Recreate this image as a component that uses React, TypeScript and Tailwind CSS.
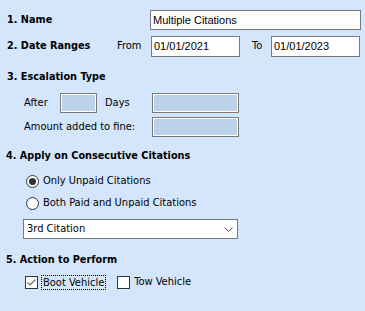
import React from "react";

const LABEL = "font-['DejaVu_Sans_Condensed','DejaVu_Sans',sans-serif] text-[11px] text-black";
const HEAD = "font-['DejaVu_Sans_Condensed','DejaVu_Sans',sans-serif] text-[10.8px] font-bold text-black";
const FIELD = "font-['Liberation_Sans',Arial,sans-serif] text-[11px] text-black";

const TextBox = ({ value, className }: { value: string; className: string }) => (
  <div
    className={`${className} ${FIELD} flex items-center bg-white border border-[#7a7a7a] pl-[2px] leading-none`}
  >
    {value}
  </div>
);

const DisabledBox = ({ className }: { className: string }) => (
  <div className={`${className} h-[20px] border border-[#7a7a7a] bg-[#bdd1e9] shadow-[inset_0_0_0_1px_#fff]`} />
);

const Radio = ({ checked, label, className }: { checked?: boolean; label: string; className: string }) => (
  <div className={`${className} flex items-center h-[14px] pl-[26px]`}>
    <span className="w-[13px] h-[13px] rounded-full border border-[#333] bg-white flex items-center justify-center">
      {checked && <span className="w-[7px] h-[7px] rounded-full bg-[#333]" />}
    </span>
    <span className={`${LABEL} ml-[4px]`}>{label}</span>
  </div>
);

const Check = ({ checked }: { checked?: boolean }) => (
  <span className="w-[13px] h-[13px] border border-[#333] bg-white flex items-center justify-center">
    {checked && (
      <svg width="11" height="11" viewBox="0 0 11 11">
        <path d="M1.5 5.5 L4 8 L9.5 2.5" fill="none" stroke="#666" strokeWidth="1.2" />
      </svg>
    )}
  </span>
);

export default function App() {
  return (
    <div className="w-[365px] h-[311px] bg-[#d4e6fc] flex flex-col overflow-hidden">
      {/* 1. Name */}
      <div className="flex items-center h-[20px] mt-[10px] pl-[7px]">
        <span className={`${HEAD} w-[143px]`}>1. Name</span>
        <TextBox value="Multiple Citations" className="w-[211px] h-[20px]" />
      </div>

      {/* 2. Date Ranges */}
      <div className="flex items-center h-[21px] mt-[6px] pl-[7px]">
        <span className={`${HEAD} w-[110px]`}>2. Date Ranges</span>
        <span className={`${LABEL} w-[34px]`}>From</span>
        <TextBox value="01/01/2021" className="w-[89px] h-[21px]" />
        <span className={`${LABEL} ml-[12px] w-[19px]`}>To</span>
        <TextBox value="01/01/2023" className="w-[89px] h-[21px]" />
      </div>

      {/* 3. Escalation Type */}
      <div className={`${HEAD} h-[16px] mt-[12px] pl-[7px] flex items-center`}>3. Escalation Type</div>
      <div className="flex items-center h-[20px] mt-[8px] pl-[24px]">
        <span className={`${LABEL} w-[36px]`}>After</span>
        <DisabledBox className="w-[37px]" />
        <span className={`${LABEL} ml-[8px] w-[47px]`}>Days</span>
        <DisabledBox className="w-[87px]" />
      </div>
      <div className="flex items-center h-[20px] mt-[4px] pl-[24px]">
        <span className={`${LABEL} w-[128px]`}>Amount added to fine:</span>
        <DisabledBox className="w-[87px]" />
      </div>

      {/* 4. Apply on Consecutive Citations */}
      <div className={`${HEAD} h-[16px] mt-[11px] pl-[6px] flex items-center`}>4. Apply on Consecutive Citations</div>
      <Radio checked label="Only Unpaid Citations" className="mt-[10px]" />
      <Radio label="Both Paid and Unpaid Citations" className="mt-[8px]" />
      <div className="mt-[9px] ml-[23px] w-[215px] h-[20px] bg-white border border-[#7a7a7a] flex items-center justify-between pl-[3px] pr-[4px]">
        <span className={LABEL}>3rd Citation</span>
        <svg width="9" height="5" viewBox="0 0 9 5">
          <path d="M0.5 0.5 L4.5 4.5 L8.5 0.5" fill="none" stroke="#555" strokeWidth="1" />
        </svg>
      </div>

      {/* 5. Action to Perform */}
      <div className={`${HEAD} h-[16px] mt-[13px] pl-[6px] flex items-center`}>5. Action to Perform</div>
      <div className="flex items-center h-[15px] mt-[7px] pl-[25px]">
        <Check checked />
        <span className={`${LABEL} ml-[3px] px-[1px] border border-dotted border-black leading-[13px]`}>Boot Vehicle</span>
        <span className="ml-[11px]">
          <Check />
        </span>
        <span className={`${LABEL} ml-[4px]`}>Tow Vehicle</span>
      </div>
    </div>
  );
}
